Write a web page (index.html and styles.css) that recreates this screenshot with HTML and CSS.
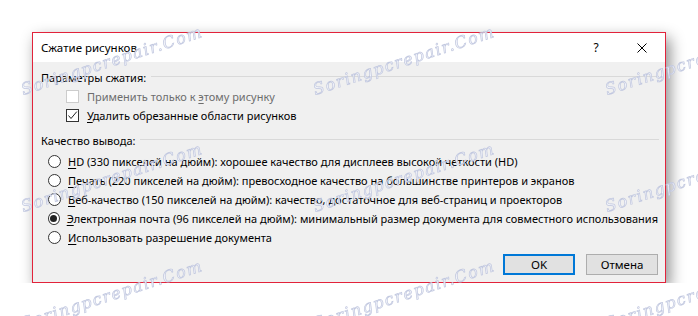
FILE: index.html
```html
<!DOCTYPE html>
<html lang="ru">
<head>
  <meta charset="UTF-8">
  <meta name="viewport" content="width=device-width, initial-scale=1.0">
  <title>Сжатие рисунков</title>
  <link rel="stylesheet" href="styles.css">
</head>

<body>
  <div class="dialog">
    <div class="titleBar">
      <span class="title">Сжатие рисунков</span>
      <span class="captionButton">?</span>
      <span class="captionButton">
        <svg width="10" height="10" viewBox="0 0 10 10"><path d="M0.5 0.5 L9.5 9.5 M9.5 0.5 L0.5 9.5" stroke="#000" stroke-width="1" fill="none"/></svg>
      </span>
    </div>

    <div class="content">
      <div class="groupHead">Параметры сжатия:</div>
      <div class="row checkRow disabled">
        <span class="checkbox"></span>
        <span>Применить только к <u>э</u>тому рисунку</span>
      </div>
      <div class="row checkRow">
        <span class="checkbox">
          <svg width="11" height="11" viewBox="0 0 11 11"><path d="M1.5 5.5 L4 8.5 L9.8 1.6" stroke="#222" stroke-width="1" fill="none"/></svg>
        </span>
        <span><u>У</u>далить обрезанные области рисунков</span>
      </div>

      <div class="groupHead second">Качество вывода:</div>
      <div class="radioList">
        <div class="row radioRow">
          <span class="radio"></span>
          <span><u>H</u>D (330 пикселей на дюйм): хорошее качество для дисплеев высокой четкости (HD)</span>
        </div>
        <div class="row radioRow">
          <span class="radio"></span>
          <span><u>П</u>ечать (220 пикселей на дюйм): превосходное качество на большинстве принтеров и экранов</span>
        </div>
        <div class="row radioRow">
          <span class="radio"></span>
          <span><u>В</u>еб-качество (150 пикселей на дюйм): качество, достаточное для веб-страниц и проекторов</span>
        </div>
        <div class="row radioRow">
          <span class="radio selected"></span>
          <span><u>Э</u>лектронная почта (96 пикселей на дюйм): минимальный размер документа для совместного использования</span>
        </div>
        <div class="row radioRow">
          <span class="radio"></span>
          <span><u>И</u>спользовать разрешение документа</span>
        </div>
      </div>

      <div class="buttons">
        <button class="btn default">OK</button>
        <button class="btn">Отмена</button>
      </div>
    </div>
  </div>

  <div class="watermarks">
    <div class="watermarkGrid">
      <span class="watermark">Soringpcrepair.Com</span>
      <span class="watermark">Soringpcrepair.Com</span>
      <span class="watermark">Soringpcrepair.Com</span>
      <span class="watermark">Soringpcrepair.Com</span>
      <span class="watermark">Soringpcrepair.Com</span>
      <span class="watermark">Soringpcrepair.Com</span>
      <span class="watermark">Soringpcrepair.Com</span>
      <span class="watermark">Soringpcrepair.Com</span>
      <span class="watermark">Soringpcrepair.Com</span>
    </div>
  </div>
</body>
</html>
```

FILE: styles.css
```css
body {
  margin: 0;
  background-color: #fff;
  font-family: "Noto Sans", "Open Sans", sans-serif;
  font-size: 11px;
  color: #000;
  overflow: hidden;
}

.dialog {
  margin: 32px 0 0 32px;
  width: 634px;
  box-sizing: border-box;
  border: 1px solid #e2233b;
  background-color: #f0f0f0;
  box-shadow: 4px 6px 14px rgba(0, 0, 0, 0.45);
}

.titleBar {
  height: 29px;
  display: flex;
  align-items: center;
  background-color: #fff;
}

.title {
  flex: 1;
  padding-left: 8px;
  font-size: 11.5px;
}

.captionButton {
  width: 46px;
  height: 29px;
  display: flex;
  align-items: center;
  justify-content: center;
  font-size: 12px;
}

.content {
  padding: 6px 7px 7px 8px;
  display: flex;
  flex-direction: column;
}

.row {
  height: 19px;
  display: flex;
  align-items: center;
  white-space: nowrap;
}

.groupHead {
  height: 19px;
  display: flex;
  align-items: center;
  gap: 5px;
  margin-right: -1px;
}

.groupHead::after {
  content: "";
  flex: 1;
  height: 1px;
  margin-top: -3px;
  background-color: #d9d9d9;
}

.groupHead.second {
  margin-top: 6px;
}

.checkRow {
  padding-left: 25px;
  gap: 8px;
}

.checkbox {
  width: 13px;
  height: 13px;
  box-sizing: border-box;
  border: 1px solid #333;
  background-color: #fff;
  display: flex;
  align-items: center;
  justify-content: center;
}

.disabled {
  color: #6d6d6d;
}

.disabled .checkbox {
  border-color: #cccccc;
}

.radioList {
  margin-top: 2px;
}

.radioRow {
  padding-left: 7px;
  gap: 7px;
}

.radio {
  width: 13px;
  height: 13px;
  box-sizing: border-box;
  border: 1px solid #333;
  border-radius: 50%;
  background-color: #fff;
  display: flex;
  align-items: center;
  justify-content: center;
}

.radio.selected::after {
  content: "";
  width: 7px;
  height: 7px;
  border-radius: 50%;
  background-color: #222;
}

u {
  text-underline-offset: 2px;
}

.buttons {
  margin-top: 7px;
  display: flex;
  justify-content: flex-end;
  gap: 11px;
}

.btn {
  width: 72px;
  height: 21px;
  box-sizing: border-box;
  border: 1px solid #adadad;
  background-color: #e1e1e1;
  font-family: inherit;
  font-size: 11.5px;
  color: #000;
  padding: 0;
}

.btn.default {
  border: 2px solid #0078d7;
}

.watermarks {
  position: fixed;
  inset: 0;
  overflow: hidden;
  pointer-events: none;
}

.watermarkGrid {
  margin: 2px 0 0 -34px;
  display: grid;
  grid-template-columns: repeat(3, 292px);
  grid-auto-rows: 117px;
}

.watermark {
  display: flex;
  align-items: center;
  justify-content: center;
  transform: rotate(-18deg);
  font-family: "DejaVu Serif", serif;
  font-style: italic;
  font-size: 16px;
  letter-spacing: 1.5px;
  color: rgba(242, 244, 251, 0.9);
  -webkit-text-stroke: 0.7px rgba(180, 188, 216, 0.8);
}
```
